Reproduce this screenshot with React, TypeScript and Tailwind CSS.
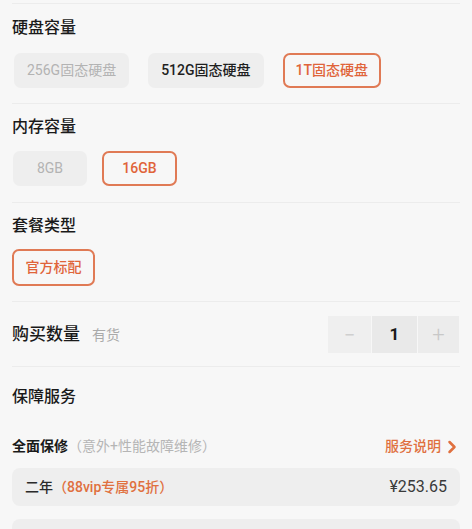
import { ChevronRight } from "lucide-react";

const font = { fontFamily: 'Roboto, "Noto Sans CJK SC", sans-serif' };

function Option({ label, state }: { label: string; state: "off" | "on" | "sel" }) {
  const cls =
    state === "sel"
      ? "border-2 border-[#e07a55] text-[#e0643a] bg-[#f7f7f7] font-medium"
      : state === "on"
      ? "border-2 border-transparent bg-[#eeeeee] text-[#1f1f1f] font-medium"
      : "border-2 border-transparent bg-[#eeeeee] text-[#b3b3b3]";
  return (
    <div className={`h-[35px] px-[11px] flex items-center justify-center rounded-[7px] text-[14px] ${cls}`}>
      {label}
    </div>
  );
}

export default function App() {
  return (
    <div className="w-[472px] h-[529px] overflow-hidden bg-[#f7f7f7]" style={font}>
      <div className="mx-3 border-t border-[#ececec] mt-[3px]" />

      {/* 硬盘容量 */}
      <section className="px-3 pt-[13px] pb-[15px]">
        <h2 className="text-[16px] font-medium text-[#1a1a1a] leading-[22px]">硬盘容量</h2>
        <div className="flex gap-[19px] mt-[14px] pl-[2px]">
          <Option label="256G固态硬盘" state="off" />
          <Option label="512G固态硬盘" state="on" />
          <Option label="1T固态硬盘" state="sel" />
        </div>
      </section>
      <div className="mx-3 border-t border-[#ececec]" />

      {/* 内存容量 */}
      <section className="px-3 pt-[12px] pb-[16px]">
        <h2 className="text-[16px] font-medium text-[#1a1a1a] leading-[22px]">内存容量</h2>
        <div className="flex gap-[15px] mt-[13px] pl-[1px]">
          <div className="w-[74px]"><Option label="8GB" state="off" /></div>
          <div className="w-[75px]"><Option label="16GB" state="sel" /></div>
        </div>
      </section>
      <div className="mx-3 border-t border-[#ececec]" />

      {/* 套餐类型 */}
      <section className="px-3 pt-[12px] pb-[15px]">
        <h2 className="text-[16px] font-medium text-[#1a1a1a] leading-[22px]">套餐类型</h2>
        <div className="flex mt-[12px]">
          <div className="w-[83px] h-[37px] [&>div]:h-[37px]"><Option label="官方标配" state="sel" /></div>
        </div>
      </section>
      <div className="mx-3 border-t border-[#ececec]" />

      {/* 购买数量 */}
      <section className="px-3 pt-[14px] pb-[13px] flex items-center justify-between">
        <div className="flex items-baseline gap-[12px]">
          <span className="text-[17px] font-medium text-[#1a1a1a]">购买数量</span>
          <span className="text-[14px] text-[#aaa]">有货</span>
        </div>
        <div className="flex h-[37px] mr-[1px]">
          <div className="w-[43px] flex items-center justify-center bg-[#efefef] text-[#cfcfcf] text-[20px]">−</div>
          <div className="w-[45px] ml-[1px] flex items-center justify-center bg-[#e9e9e9] text-[#1a1a1a] text-[17px] font-bold">1</div>
          <div className="w-[41px] ml-[1px] flex items-center justify-center bg-[#ececec] text-[#c8c8c8] text-[22px] font-light">+</div>
        </div>
      </section>
      <div className="mx-3 border-t border-[#ececec]" />

      {/* 保障服务 */}
      <section className="px-3 pt-[19px]">
        <h2 className="text-[16px] font-medium text-[#1a1a1a] leading-[22px]">保障服务</h2>
        <div className="flex items-center justify-between mt-[28px]">
          <div className="flex items-center">
            <span className="text-[14px] font-bold text-[#1a1a1a]">全面保修</span>
            <span className="text-[14px] text-[#b5b5b5]">（意外+性能故障维修）</span>
          </div>
          <div className="flex items-center text-[#e0703f] text-[14px] font-medium">
            服务说明
            <ChevronRight className="w-[20px] h-[20px] ml-[1px] -mr-[2px]" strokeWidth={3} />
          </div>
        </div>
        <div className="mt-[11px] h-[38px] rounded-[8px] bg-[#eeeeee] flex items-center justify-between px-[13px]">
          <div className="text-[14px] font-medium">
            <span className="text-[#2a2a2a]">二年</span>
            <span className="text-[#e0703f]">（88vip专属95折）</span>
          </div>
          <span className="text-[16px] text-[#3a3a3a]">¥253.65</span>
        </div>
        <div className="mt-[13px] h-[38px] rounded-[8px] bg-[#eeeeee]" />
      </section>
    </div>
  );
}
